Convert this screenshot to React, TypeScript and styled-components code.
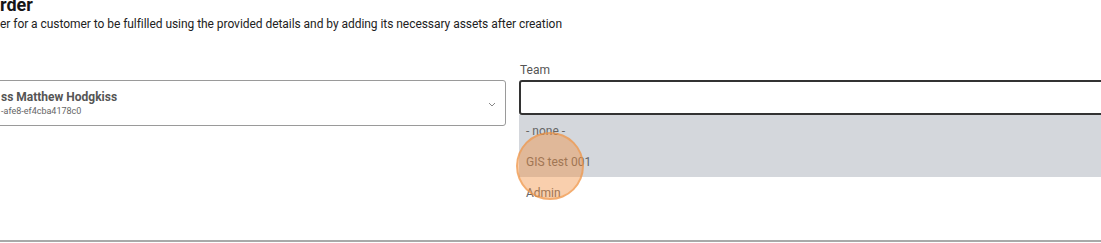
import styled, { createGlobalStyle } from "styled-components";

const GlobalStyle = createGlobalStyle`
  html, body {
    margin: 0;
    padding: 0;
    background: #ffffff;
    overflow: hidden;
  }
  body {
    width: 1101px;
    height: 243px;
    font-family: Roboto, "Liberation Sans", sans-serif;
  }
`;

const Page = styled.div`
  position: relative;
  width: 1101px;
  height: 243px;
  overflow: hidden;
`;

const Title = styled.h1`
  margin: -6px 0 0 0;
  font-size: 18px;
  line-height: 22px;
  font-weight: 700;
  color: #161616;
`;

const Subtitle = styled.p`
  margin: 0;
  font-size: 12px;
  line-height: 16px;
  color: #222;
  letter-spacing: -0.05px;
`;

const FormRow = styled.div`
  display: grid;
  grid-template-columns: 526px 640px;
  column-gap: 13px;
  margin: 30px 0 0 -20px;
  height: 64px;
`;

const Field = styled.div`
  position: relative;
  display: flex;
  flex-direction: column;
`;

const Label = styled.label`
  font-size: 12px;
  line-height: 16px;
  color: #555;
  margin-bottom: 2px;
  padding-left: 1px;
  min-height: 16px;
`;

const SelectBox = styled.div`
  display: flex;
  align-items: center;
  justify-content: space-between;
  height: 46px;
  box-sizing: border-box;
  border: 1px solid #9a9a9a;
  border-radius: 3px;
  padding: 0 9px 0 20px;
  background: #fff;
`;

const SelectText = styled.div`
  display: flex;
  flex-direction: column;
`;

const Primary = styled.span`
  font-size: 12px;
  line-height: 16px;
  font-weight: 700;
  color: #555;
`;

const Secondary = styled.span`
  font-size: 9px;
  line-height: 12px;
  color: #666;
`;

const Chevron = styled.svg`
  width: 8px;
  height: 5px;
  margin-top: 2px;
`;

const Input = styled.input`
  height: 35px;
  box-sizing: border-box;
  border: 2px solid #333;
  border-radius: 3px;
  background: #fff;
  outline: none;
  padding: 0 8px;
  font: inherit;
`;

const Menu = styled.ul`
  position: absolute;
  top: 53px;
  left: 0;
  right: 0;
  margin: 0;
  padding: 0;
  list-style: none;
  background: #fff;
`;

const Option = styled.li<{ $highlighted?: boolean }>`
  height: 31px;
  display: flex;
  align-items: center;
  padding-left: 7px;
  font-size: 12px;
  color: #666;
  background: ${(p) => (p.$highlighted ? "#d4d7dc" : "#ffffff")};
`;

const Divider = styled.hr`
  margin: 0;
  margin-top: 114px;
  border: none;
  border-top: 2px solid #a9a9a9;
`;

const ClickMarker = styled.div`
  position: absolute;
  left: 516px;
  top: 132px;
  width: 68px;
  height: 68px;
  box-sizing: border-box;
  border-radius: 50%;
  background: rgba(240, 140, 60, 0.42);
  border: 2px solid rgba(240, 150, 70, 0.6);
  pointer-events: none;
`;

export default function App() {
  return (
    <>
      <GlobalStyle />
      <Page>
        <Title>rder</Title>
        <Subtitle>
          er for a customer to be fulfilled using the provided details and by adding its necessary assets after creation
        </Subtitle>
        <FormRow>
          <Field>
            <Label />
            <SelectBox>
              <SelectText>
                <Primary>ss Matthew Hodgkiss</Primary>
                <Secondary>-afe8-ef4cba4178c0</Secondary>
              </SelectText>
              <Chevron viewBox="0 0 8 5">
                <path d="M1 1 L4 4 L7 1" fill="none" stroke="#888" strokeWidth="1" />
              </Chevron>
            </SelectBox>
          </Field>
          <Field>
            <Label>Team</Label>
            <Input type="text" />
            <Menu>
              <Option $highlighted>- none -</Option>
              <Option $highlighted>GIS test 001</Option>
              <Option>Admin</Option>
            </Menu>
          </Field>
        </FormRow>
        <Divider />
        <ClickMarker />
      </Page>
    </>
  );
}
